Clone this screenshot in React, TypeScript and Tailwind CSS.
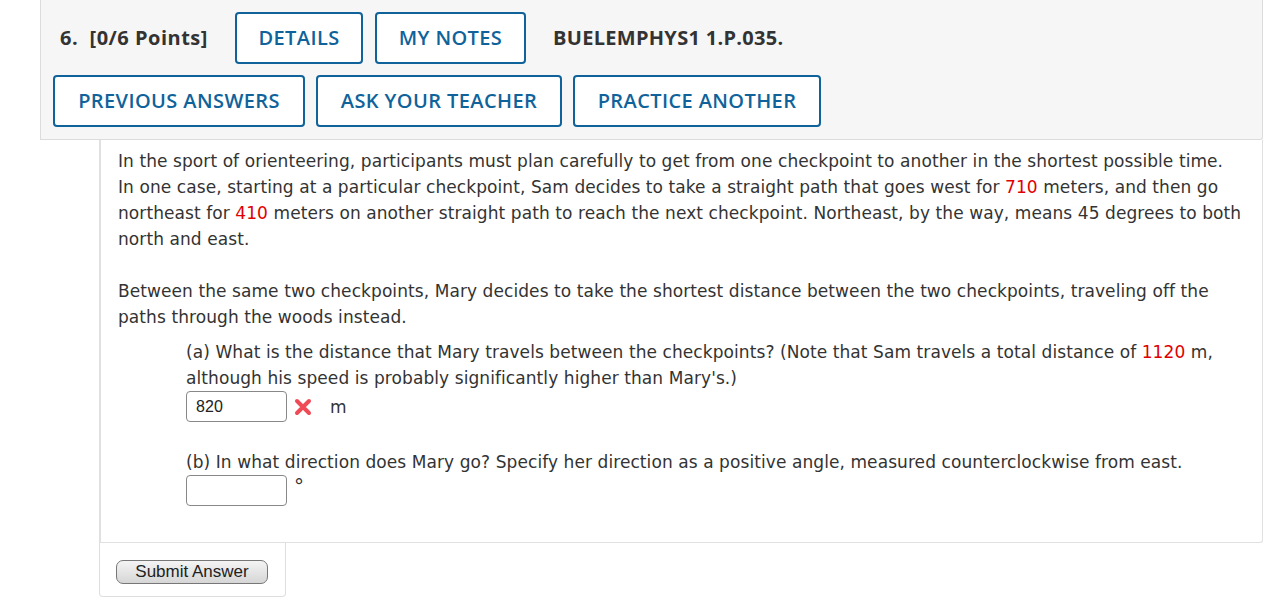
import React from "react";

const HeadBtn = ({ label, w }: { label: string; w: string }) => (
  <button
    className={`${w} h-[52px] rounded-[4px] border-2 border-[#0f639a] bg-white text-[20px] font-semibold text-[#0f639a] tracking-[0.4px]`}
    style={{ fontFamily: '"Open Sans", sans-serif' }}
  >
    {label}
  </button>
);

const Red = ({ children }: { children: React.ReactNode }) => (
  <span className="text-[#e00000]">{children}</span>
);

export default function App() {
  return (
    <div className="w-[1284px] h-[606px] overflow-hidden bg-white text-[#333]">
      {/* Question header */}
      <div
        className="ml-[40px] w-[1223px] h-[140px] bg-[#f6f6f6] border border-t-0 border-[#dcdcdc] rounded-br-[3px] pt-[12px]"
        style={{ fontFamily: '"Open Sans", sans-serif' }}
      >
        <div className="flex items-center pl-[19px] gap-[12px]">
          <span className="text-[20px] font-bold text-[#333] w-[163px] tracking-[0.5px] whitespace-nowrap">
            6.&nbsp; [0/6 Points]
          </span>
          <HeadBtn label="DETAILS" w="w-[128px]" />
          <HeadBtn label="MY NOTES" w="w-[151px]" />
          <span className="ml-[15px] text-[20px] font-bold text-[#333] tracking-[0.3px]">
            BUELEMPHYS1 1.P.035.
          </span>
        </div>
        <div className="flex items-center pl-[12px] gap-[11px] mt-[11px]">
          <HeadBtn label="PREVIOUS ANSWERS" w="w-[252px]" />
          <HeadBtn label="ASK YOUR TEACHER" w="w-[246px]" />
          <HeadBtn label="PRACTICE ANOTHER" w="w-[248px]" />
        </div>
      </div>

      {/* Question body */}
      <div
        className="ml-[99px] w-[1164px] h-[403px] border-l-2 border-r border-b border-[#e0e0e0] rounded-br-[3px] pl-[17px] pr-[10px] pt-[8px] text-[17px] leading-[26px] tracking-[0.08px] whitespace-nowrap"
        style={{ fontFamily: '"DejaVu Sans", Verdana, sans-serif' }}
      >
        <p>
          In the sport of orienteering, participants must plan carefully to get from one checkpoint to another in the shortest possible time.
          <br />
          In one case, starting at a particular checkpoint, Sam decides to take a straight path that goes west for <Red>710</Red> meters, and then go
          <br />
          northeast for <Red>410</Red> meters on another straight path to reach the next checkpoint. Northeast, by the way, means 45 degrees to both
          <br />
          north and east.
        </p>
        <p className="mt-[26px]">
          Between the same two checkpoints, Mary decides to take the shortest distance between the two checkpoints, traveling off the
          <br />
          paths through the woods instead.
        </p>
        <div className="pl-[68px] mt-[9px]">
          <p>
            (a) What is the distance that Mary travels between the checkpoints? (Note that Sam travels a total distance of <Red>1120</Red> m,
            <br />
            although his speed is probably significantly higher than Mary's.)
          </p>
          <div className="flex items-center h-[31px]">
            <div
              className="w-[101px] h-[31px] border border-[#888] rounded-[4px] bg-white pl-[9px] flex items-center text-[16px] text-[#222]"
              style={{ fontFamily: '"Liberation Sans", Arial, sans-serif' }}
            >
              820
            </div>
            <svg width="18" height="18" viewBox="0 0 18 18" className="ml-[7px]">
              <path d="M3 3 L15 15 M15 3 L3 15" stroke="#ef4a55" strokeWidth="4" strokeLinecap="round" />
            </svg>
            <span className="ml-[18px]">m</span>
          </div>
          <p className="mt-[27px]">
            (b) In what direction does Mary go? Specify her direction as a positive angle, measured counterclockwise from east.
          </p>
          <div className="flex items-start h-[31px]">
            <div className="w-[101px] h-[31px] border border-[#888] rounded-[4px] bg-white" />
            <span className="ml-[7px] leading-[22px] text-[20px]">°</span>
          </div>
        </div>
      </div>

      {/* Submit */}
      <div className="ml-[99px] w-[187px] h-[54px] border-x border-b border-[#dedede] rounded-b-[4px] pl-[16px] pt-[16px]">
        <button
          className="w-[152px] h-[24px] rounded-[7px] border border-[#777] bg-gradient-to-b from-[#f4f4f4] to-[#d6d6d6] text-[17px] leading-[20px] text-[#222]"
          style={{ fontFamily: '"Liberation Sans", Arial, sans-serif' }}
        >
          Submit Answer
        </button>
      </div>
    </div>
  );
}
